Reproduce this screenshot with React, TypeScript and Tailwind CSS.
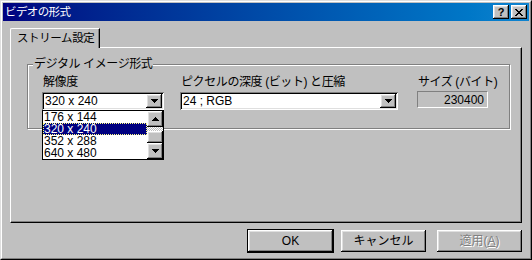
import { FC, ReactNode } from "react";

const raised =
  "shadow-[inset_-1px_-1px_0_#000,inset_1px_1px_0_#fff,inset_-2px_-2px_0_#808080,inset_2px_2px_0_#dfdfdf]";
const sunken =
  "shadow-[inset_1px_1px_0_#808080,inset_-1px_-1px_0_#fff,inset_2px_2px_0_#000,inset_-2px_-2px_0_#dfdfdf]";

const Arrow: FC<{ up?: boolean }> = ({ up }) => (
  <svg width="7" height="4" viewBox="0 0 7 4" shapeRendering="crispEdges" className={up ? "rotate-180" : ""}>
    <path d="M0 0h7v1H0zM1 1h5v1H1zM2 2h3v1H2zM3 3h1v1H3z" fill="#000" />
  </svg>
);

const ScrollBtn: FC<{ up?: boolean }> = ({ up }) => (
  <div className={`flex h-[16px] w-[16px] items-center justify-center bg-[#c0c0c0] ${raised}`}>
    <Arrow up={up} />
  </div>
);

const Combo: FC<{ value: string; className: string }> = ({ value, className }) => (
  <div className={`flex h-[18px] bg-white p-[2px] ${sunken} ${className}`}>
    <span className="flex-1 pl-[1px] text-[12px] leading-[14px] text-black">{value}</span>
    <div className={`flex h-[14px] w-[16px] items-center justify-center bg-[#c0c0c0] ${raised}`}>
      <Arrow />
    </div>
  </div>
);

const Field: FC<{ label: ReactNode; children: ReactNode; className?: string }> = ({ label, children, className }) => (
  <div className={`relative flex flex-col ${className ?? ""}`}>
    <div className="h-[14px] pl-px text-[12px] leading-[14px] tracking-[-0.4px] text-black">{label}</div>
    <div className="mt-[3px]">{children}</div>
  </div>
);

const RESOLUTIONS = ["176 x 144", "320 x 240", "352 x 288", "640 x 480"];

const DropList: FC = () => (
  <div className="absolute left-0 top-[45px] z-10 flex h-[50px] w-[122px] border border-black bg-white">
    <div className="flex flex-1 flex-col">
      {RESOLUTIONS.map((r) => (
        <div
          key={r}
          className={`h-[12px] pl-px text-[12px] leading-[12px] ${
            r === "320 x 240"
              ? "bg-[#000080] text-white outline-1 -outline-offset-1 outline-dotted outline-[#ffff80]"
              : "text-black"
          }`}
        >
          {r}
        </div>
      ))}
    </div>
    <div className="flex w-[16px] flex-col">
      <ScrollBtn up />
      <div className="h-[4px] bg-[repeating-conic-gradient(#c0c0c0_0_25%,#fff_0_50%)] bg-[length:2px_2px]" />
      <div className={`h-[12px] bg-[#c0c0c0] ${raised}`} />
      <ScrollBtn />
    </div>
  </div>
);

const PushButton: FC<{ children: ReactNode; def?: boolean; disabled?: boolean }> = ({ children, def, disabled }) => (
  <div
    className={`flex h-[22px] w-[85px] items-center justify-center bg-[#c0c0c0] text-[12px] leading-[14px] ${raised} ${
      def ? "outline outline-1 outline-black" : ""
    } ${disabled ? "text-[#808080] [text-shadow:1px_1px_0_#fff]" : "text-black"}`}
  >
    {children}
  </div>
);

const App: FC = () => (
  <div className="h-[260px] w-[532px] overflow-hidden bg-white font-['Liberation_Sans','Noto_Sans_CJK_JP',sans-serif]">
    <div className="h-[260px] w-[532px] border border-b-black border-l-[#dfdfdf] border-r-black border-t-[#dfdfdf]">
      <div className="flex h-full flex-col border border-b-[#808080] border-l-white border-r-[#808080] border-t-white bg-[#c0c0c0] p-px">
        {/* title bar */}
        <div className="flex h-[18px] items-center bg-gradient-to-r from-[#000080] to-[#1084d0] pl-[2px] pr-[2px]">
          <span className="flex-1 text-[11.5px] leading-[14px] tracking-[-0.6px] text-white">ビデオの形式</span>
          <div className={`flex h-[14px] w-[16px] items-center justify-center bg-[#c0c0c0] ${raised}`}>
            <span className="text-[11px] font-bold leading-[11px] text-black">?</span>
          </div>
          <div className={`ml-[2px] flex h-[14px] w-[16px] items-center justify-center bg-[#c0c0c0] ${raised}`}>
            <svg width="8" height="7" viewBox="0 0 8 7" shapeRendering="crispEdges">
              <path
                d="M0 0h2v1H0zM6 0h2v1H6zM1 1h2v1H1zM5 1h2v1H5zM2 2h4v1H2zM3 3h2v1H3zM2 4h4v1H2zM1 5h2v1H1zM5 5h2v1H5zM0 6h2v1H0zM6 6h2v1H6z"
                fill="#000"
              />
            </svg>
          </div>
        </div>

        {/* body */}
        <div className="flex flex-1 flex-col px-[7px] pt-[7px]">
          <div className="flex">
            <div className="relative z-10 -mb-px flex h-[20px] items-start rounded-tl-[2px] border-l border-t border-r border-l-white border-t-white border-r-black bg-[#c0c0c0] pl-[6px] pr-[5px] pt-[2px] shadow-[inset_-1px_0_0_#808080]">
              <span className="text-[11.5px] leading-[14px] tracking-[-0.4px] text-black">ストリーム設定</span>
            </div>
          </div>
          <div className="h-[176px] border border-b-black border-l-white border-r-black border-t-white shadow-[inset_-1px_-1px_0_#808080]">
            <div className="relative ml-[16px] mt-[16px] h-[65px] w-[483px] border border-[#808080] shadow-[inset_1px_1px_0_#fff,1px_1px_0_#fff]">
              <span className="absolute -top-[8px] left-[5px] bg-[#c0c0c0] px-px text-[12px] leading-[14px] tracking-[-0.4px] text-black">
                デジタル イメージ形式
              </span>
              <div className="flex pl-[14px] pt-[10px]">
                <Field label="解像度">
                  <Combo value="320 x 240" className="w-[122px]" />
                </Field>
                <Field label="ピクセルの深度 (ビット) と圧縮" className="ml-[16px]">
                  <Combo value="24 ; RGB" className="w-[218px]" />
                </Field>
                <Field label="サイズ (バイト)" className="ml-[19px]">
                  <div className="-mt-px flex h-[17px] w-[71px] items-center justify-end border border-b-white border-l-[#808080] border-r-white border-t-[#808080] pr-[3px] text-[12px] leading-[14px] text-black">
                    230400
                  </div>
                </Field>
              </div>
              <div className="absolute left-[14px] top-0">
                <DropList />
              </div>
            </div>
          </div>

          {/* buttons */}
          <div className="mt-[7px] flex justify-end">
            <PushButton def>OK</PushButton>
            <div className="ml-[8px]">
              <PushButton>キャンセル</PushButton>
            </div>
            <div className="ml-[11px]">
              <PushButton disabled>
                適用(<span className="underline">A</span>)
              </PushButton>
            </div>
          </div>
        </div>
      </div>
    </div>
  </div>
);

export default App;
